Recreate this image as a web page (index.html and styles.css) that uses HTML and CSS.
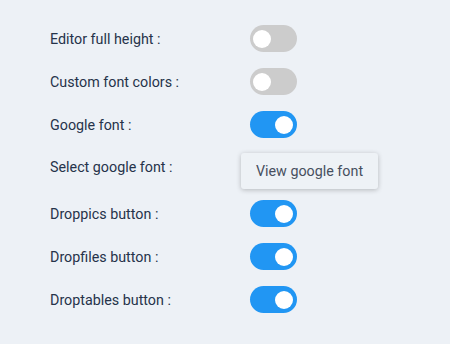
FILE: index.html
```html
<!DOCTYPE html>
<html>
<head>
<meta charset="utf-8">
<link rel="stylesheet" href="styles.css">
</head>
<body>
<div class="settings">
  <div class="row">
    <span class="label">Editor full height :</span>
    <span class="toggle"><span class="knob"></span></span>
  </div>
  <div class="row">
    <span class="label">Custom font colors :</span>
    <span class="toggle"><span class="knob"></span></span>
  </div>
  <div class="row">
    <span class="label">Google font :</span>
    <span class="toggle on"><span class="knob"></span></span>
  </div>
  <div class="row row-button">
    <span class="label">Select google font :</span>
    <button class="btn">View google font</button>
  </div>
  <div class="row">
    <span class="label">Droppics button :</span>
    <span class="toggle on"><span class="knob"></span></span>
  </div>
  <div class="row">
    <span class="label">Dropfiles button :</span>
    <span class="toggle on"><span class="knob"></span></span>
  </div>
  <div class="row">
    <span class="label">Droptables button :</span>
    <span class="toggle on"><span class="knob"></span></span>
  </div>
</div>
</body>
</html>
```

FILE: styles.css
```css
html, body {
  margin: 0;
  padding: 0;
  background: #edf1f6;
  width: 450px;
  height: 344px;
  overflow: hidden;
  font-family: Roboto, "Liberation Sans", sans-serif;
}
.settings {
  display: flex;
  flex-direction: column;
  gap: 16px;
  padding: 25px 0 0 50px;
}
.row {
  display: flex;
  align-items: center;
  height: 27px;
}
.label {
  width: 200px;
  font-size: 14.3px;
  color: #26334a;
  line-height: 27px;
  padding-top: 1px;
}
.row-button {
  height: 30px;
  align-items: flex-start;
}
.row-button .label {
  padding-top: 0;
}
.toggle {
  display: flex;
  align-items: center;
  box-sizing: border-box;
  width: 47px;
  height: 27px;
  padding: 0 4px 0 3px;
  border-radius: 14px;
  background: #cccccc;
}
.toggle.on {
  background: #2196f3;
  justify-content: flex-end;
}
.knob {
  width: 18px;
  height: 18px;
  border-radius: 50%;
  background: #ffffff;
}
.btn {
  margin: -1px 0 0 -9px;
  width: 137px;
  height: 36px;
  border: none;
  border-radius: 3px;
  background: #eef2f6;
  box-shadow: 0 1px 5px rgba(0, 0, 0, 0.24);
  font-family: Roboto, "Liberation Sans", sans-serif;
  font-size: 14.3px;
  color: #474f5e;
  padding: 0;
  text-align: center;
}
```
